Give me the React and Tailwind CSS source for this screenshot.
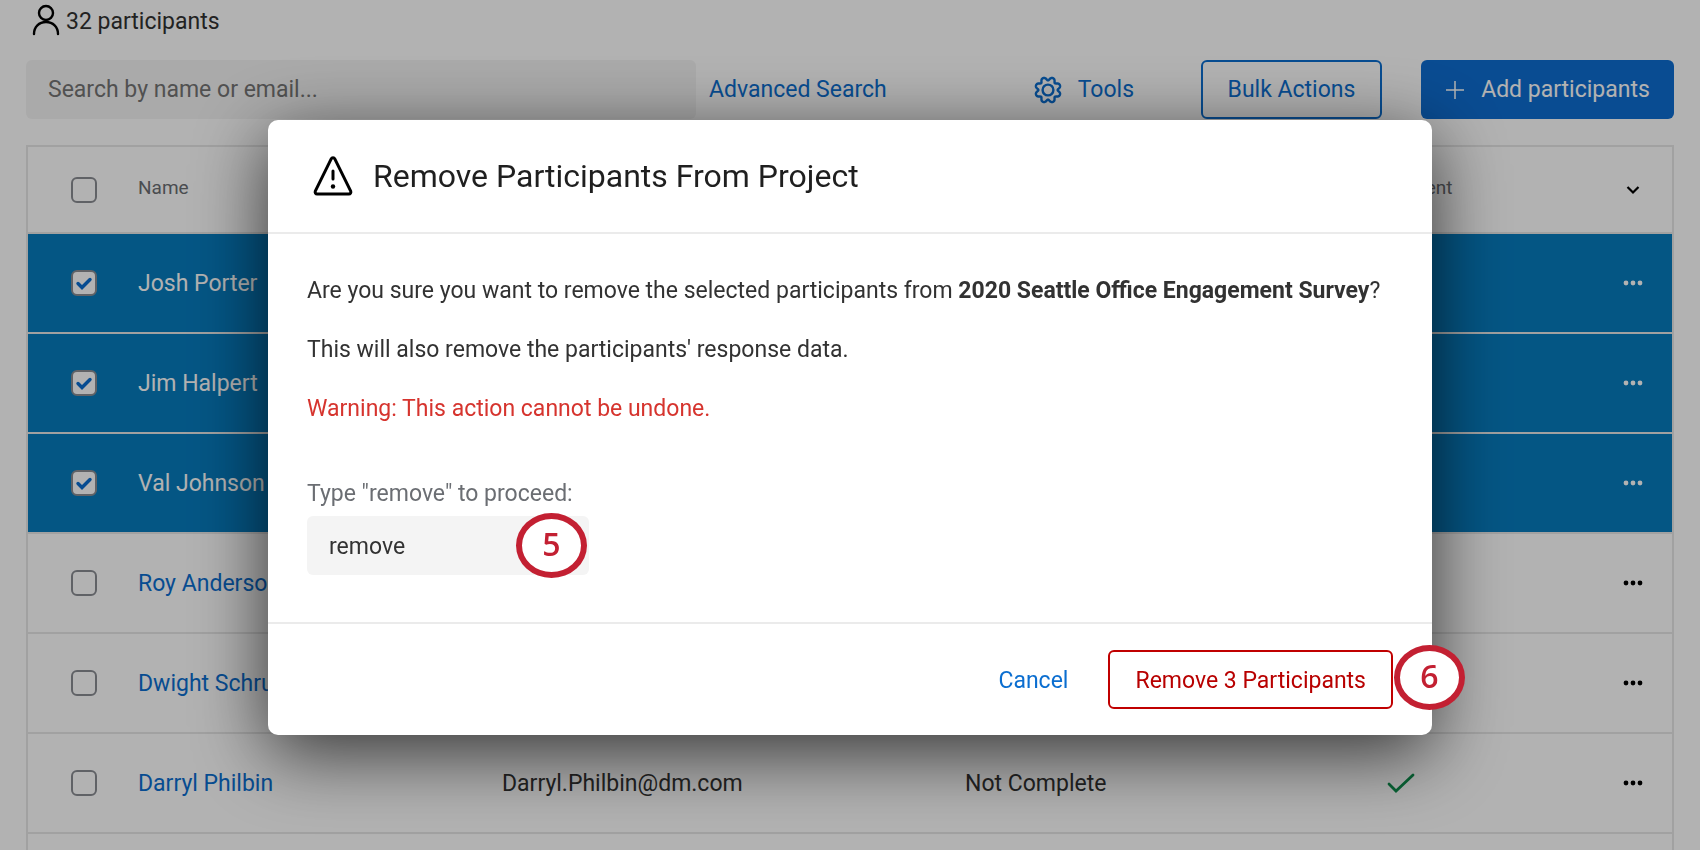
import React, { useState } from 'react';

const PARTICIPANTS = [
  { name: 'Josh Porter', selected: true },
  { name: 'Jim Halpert', selected: true },
  { name: 'Val Johnson', selected: true },
  { name: 'Roy Anderson', selected: false },
  { name: 'Dwight Schrute', selected: false },
  { name: 'Darryl Philbin', email: 'Darryl.Philbin@dm.com', status: 'Not Complete', respondent: true, selected: false },
];

// eight soft teeth around the centre, with a notch at the top
const GEAR_POINTS = Array.from({ length: 144 }, (_, i) => {
  const angle = (i / 144) * Math.PI * 2;
  const radius = 12.8 - 3.2 * Math.pow(0.5 + 0.5 * Math.cos(8 * angle), 1.6);
  return `${(14 + radius * Math.sin(angle)).toFixed(2)},${(14 - radius * Math.cos(angle)).toFixed(2)}`;
}).join(' ');

const UserIcon = () => (
  <svg width="28" height="32" viewBox="0 0 28 32" fill="none" stroke="#000" strokeWidth="2.4" strokeLinecap="round" aria-hidden="true">
    <circle cx="14" cy="9" r="7" />
    <path d="M2 30c0-7 5-12 12-12s12 5 12 12" />
  </svg>
);

const GearIcon = () => (
  <svg width="28" height="28" viewBox="0 0 28 28" fill="none" stroke="currentColor" strokeWidth="2.4" strokeLinejoin="round" aria-hidden="true">
    <circle cx="14" cy="14" r="5.4" />
    <polygon points={GEAR_POINTS} />
  </svg>
);

const WarningIcon = () => (
  <svg width="40" height="40" viewBox="0 0 40 40" fill="none" stroke="#000" strokeWidth="3" strokeLinejoin="round" strokeLinecap="round" aria-hidden="true">
    <path d="M18.2 2.8 2.3 35.2a2 2 0 0 0 1.8 2.8h31.8a2 2 0 0 0 1.8-2.8L21.8 2.8a2 2 0 0 0-3.6 0z" />
    <path d="M20 15v8" />
    <circle cx="20" cy="30.5" r="2.2" fill="#000" stroke="none" />
  </svg>
);

const DotsIcon = () => (
  <svg width="20" height="6" viewBox="0 0 20 6" fill="currentColor" aria-hidden="true">
    <circle cx="3" cy="3" r="2.4" />
    <circle cx="10" cy="3" r="2.4" />
    <circle cx="17" cy="3" r="2.4" />
  </svg>
);

const Checkbox = ({ label, defaultChecked }) => (
  <label className="relative mx-auto block size-[26px]">
    <input
      type="checkbox"
      aria-label={label}
      defaultChecked={defaultChecked}
      className="peer block size-[26px] appearance-none rounded-md border-2 border-[#8a8d93] checked:bg-white"
    />
    <svg className="pointer-events-none absolute inset-0 hidden peer-checked:block" width="26" height="26" viewBox="0 0 26 26" fill="none" stroke="#0b6ed0" strokeWidth="3.4" strokeLinecap="round" aria-hidden="true">
      <path d="m7 13.5 4 4 8-8" />
    </svg>
  </label>
);

const StepBadge = ({ number, className }) => (
  <span className={`absolute flex h-[65px] w-[71px] items-center justify-center rounded-[50%] border-6 border-[#c32032] bg-white pb-1 font-['Open_Sans',sans-serif] text-[32px] font-semibold text-[#c32032] ${className}`}>
    {number}
  </span>
);

const ParticipantRow = ({ person }) => (
  <tr className={`h-[100px] border-b-2 border-[#e7e7e7] ${person.selected ? 'bg-[#067bbe] text-white' : 'text-[#323232]'}`}>
    <td className="pl-[2px]">
      <Checkbox label={`Select ${person.name}`} defaultChecked={person.selected} />
    </td>
    <td className="pt-[2px]">
      <a href="#" className={person.selected ? 'text-white' : 'text-[#0b6ed0]'}>{person.name}</a>
    </td>
    <td className="pt-[2px]">{person.email}</td>
    <td className="pt-[2px]">{person.status}</td>
    <td className="pl-[2px]">
      {person.respondent && (
        <svg className="mx-auto text-[#0d8f4d]" width="28" height="20" viewBox="0 0 28 20" fill="none" stroke="currentColor" strokeWidth="2.8" strokeLinecap="round" aria-hidden="true">
          <path d="m2 11 7 7L26 2" />
        </svg>
      )}
    </td>
    <td className={`pr-[29px] ${person.selected ? 'text-white' : 'text-black'}`}>
      <button type="button" className="ml-auto block" aria-label={`Options for ${person.name}`}>
        <DotsIcon />
      </button>
    </td>
  </tr>
);

const RemoveDialog = () => {
  const [confirmText, setConfirmText] = useState('remove');

  return (
    <div className="fixed inset-0 flex items-start justify-center bg-black/30 px-8 pt-[120px]">
      <div
        role="dialog"
        aria-modal="true"
        aria-labelledby="dialog-title"
        className="relative w-full max-w-[1164px] rounded-[10px] bg-white shadow-[0_18px_75px_rgba(0,0,0,0.7)]"
      >
        <header className="flex h-[114px] items-center gap-5 border-b-2 border-[#ebebeb] pl-[45px]">
          <WarningIcon />
          <h1 id="dialog-title" className="text-[32px] text-[#1f1f1f]">Remove Participants From Project</h1>
        </header>

        <div className="px-[39px] pt-10 pb-[47px] text-[#323232]">
          <p className="h-[59px] leading-[34px]">
            Are you sure you want to remove the selected participants from <strong className="font-bold">2020 Seattle Office Engagement Survey</strong>?
          </p>
          <p className="h-[59px] leading-[34px]">This will also remove the participants' response data.</p>
          <p className="leading-[34px] text-[#d6342e]">Warning: This action cannot be undone.</p>
          <label htmlFor="confirm" className="mt-[50px] block leading-[36px] text-[#6b6e73]">Type "remove" to proceed:</label>
          <div className="relative mt-1 w-[282px]">
            <input
              id="confirm"
              type="text"
              value={confirmText}
              onChange={(e) => setConfirmText(e.target.value)}
              className="block h-[59px] w-full rounded-md bg-[#f4f4f4] px-[22px] pt-[2px]"
            />
            <StepBadge number={5} className="-top-[3px] right-[2px]" />
          </div>
        </div>

        <footer className="flex h-[113px] items-center justify-end gap-10 border-t-2 border-[#ebebeb] pr-[39px]">
          <button type="button" className="pt-1 text-[#0b6ed0]">Cancel</button>
          <button type="button" className="h-[59px] rounded-md border-2 border-[#c00000] px-[25px] pt-1 text-[#b80000]">Remove 3 Participants</button>
        </footer>
        <StepBadge number={6} className="-right-[33px] bottom-[25px]" />
      </div>
    </div>
  );
};

const App = () => {
  return (
    <div className="h-screen overflow-hidden bg-white font-[Roboto,sans-serif] text-[23px] text-[#323232]">
      <main className="flex h-full flex-col px-[26px] pt-1">
        <div className="flex h-8 items-center gap-[6px] pl-[6px]">
          <UserIcon />
          <span className="pt-1">32 participants</span>
        </div>

        <div className="mt-6 flex h-[59px] shrink-0 items-stretch">
          <input
            type="search"
            aria-label="Search participants"
            placeholder="Search by name or email..."
            className="w-[670px] rounded-md bg-[#f4f4f4] px-[22px] pt-[2px] placeholder:text-[#757575]"
          />
          <a href="#" className="ml-[13px] self-center pt-[2px] text-[#0b6ed0]">Advanced Search</a>
          <button type="button" className="ml-auto flex items-center gap-4 text-[#0b6ed0]">
            <GearIcon />
            <span className="pt-[2px]">Tools</span>
          </button>
          <button type="button" className="ml-[67px] w-[181px] rounded-md border-2 border-[#0b6ed0] pt-[2px] text-[#0b6ed0]">Bulk Actions</button>
          <button type="button" className="ml-[39px] flex w-[253px] items-center justify-center gap-4 rounded-md bg-[#0e6dd1] text-white">
            <svg width="20" height="20" viewBox="0 0 20 20" stroke="currentColor" strokeWidth="1.5" aria-hidden="true">
              <path d="M10 1v18M1 10h18" />
            </svg>
            <span className="pt-[2px]">Add participants</span>
          </button>
        </div>

        <div className="mt-[26px] flex-1 overflow-hidden border-x-2 border-t-2 border-[#e7e7e7]">
          <table className="w-full table-fixed border-collapse text-left">
            <colgroup>
              <col className="w-[110px]" />
              <col className="w-[364px]" />
              <col className="w-[463px]" />
              <col />
              <col className="w-[336px]" />
              <col className="w-[104px]" />
            </colgroup>
            <thead>
              <tr className="h-[86px] border-b-2 border-[#e7e7e7] text-[19px] text-[#6b6e73] *:font-normal">
                <th className="pl-[2px]">
                  <Checkbox label="Select all participants" />
                </th>
                <th className="pb-[3px]">Name</th>
                <th aria-label="Email" />
                <th aria-label="Status" />
                <th className="pb-[3px] pl-1 text-center">Respondent</th>
                <th className="pr-8">
                  <button type="button" className="ml-auto block text-black" aria-label="Choose columns">
                    <svg width="14" height="10" viewBox="0 0 14 10" fill="none" stroke="currentColor" strokeWidth="2.2" aria-hidden="true">
                      <path d="m1.5 2 5.5 5.5L12.5 2" />
                    </svg>
                  </button>
                </th>
              </tr>
            </thead>
            <tbody>
              {PARTICIPANTS.map((person) => (
                <ParticipantRow key={person.name} person={person} />
              ))}
            </tbody>
          </table>
        </div>
      </main>

      <RemoveDialog />
    </div>
  );
};

export default App;
